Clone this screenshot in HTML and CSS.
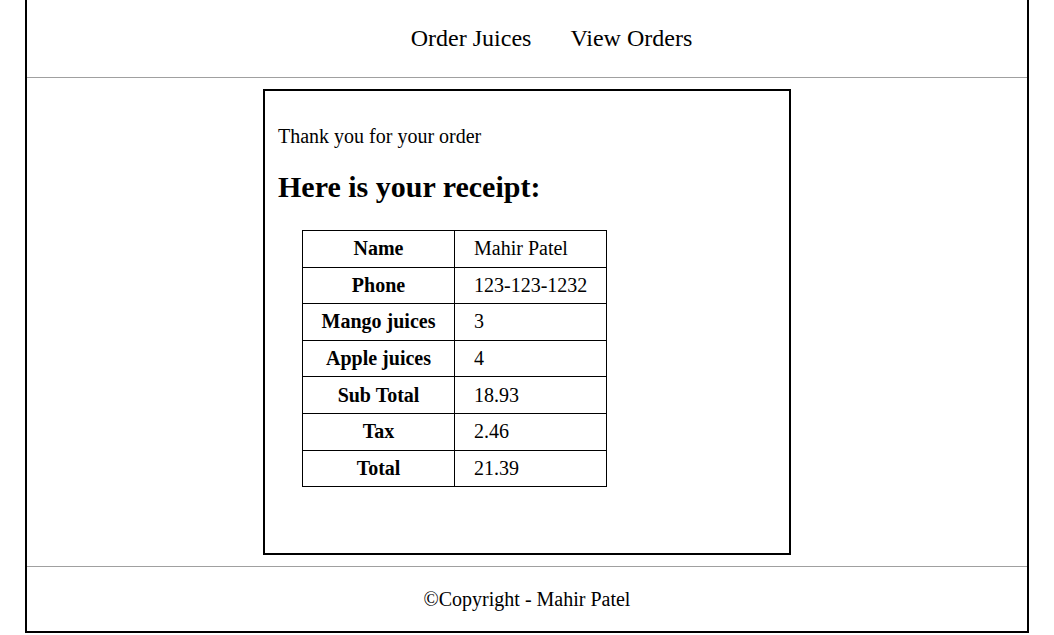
FILE: index.html
```html
<!DOCTYPE html>
<html>
<head>
<meta charset="utf-8">
<link rel="stylesheet" href="styles.css">
</head>
<body>
<div class="page">
  <header class="nav">
    <a class="nav-link">Order Juices</a>
    <a class="nav-link">View Orders</a>
  </header>
  <main class="main">
    <section class="receipt">
      <p class="thanks">Thank you for your order</p>
      <h2 class="title">Here is your receipt:</h2>
      <table class="table">
        <tr><th>Name</th><td>Mahir Patel</td></tr>
        <tr><th>Phone</th><td>123-123-1232</td></tr>
        <tr><th>Mango juices</th><td>3</td></tr>
        <tr><th>Apple juices</th><td>4</td></tr>
        <tr><th>Sub Total</th><td>18.93</td></tr>
        <tr><th>Tax</th><td>2.46</td></tr>
        <tr><th>Total</th><td>21.39</td></tr>
      </table>
    </section>
  </main>
  <footer class="footer">©Copyright - Mahir Patel</footer>
</div>
</body>
</html>
```

FILE: styles.css
```css
html, body {
  margin: 0;
  padding: 0;
  background: #fff;
}
body {
  font-family: "Liberation Serif", "Times New Roman", serif;
  font-size: 20px;
  color: #000;
}
.page {
  width: 1000px;
  margin: 0 auto;
  border: 2px solid #000;
  border-top: none;
}
.nav {
  height: 77px;
  border-bottom: 1px solid #a0a0a0;
  display: flex;
  justify-content: center;
  align-items: center;
  gap: 39px;
  padding-left: 49px;
}
.nav-link {
  font-size: 24px;
  color: #000;
}
.main {
  padding: 11px 0 11px;
}
.receipt {
  width: 524px;
  height: 462px;
  margin: 0 auto;
  border: 2px solid #000;
  padding: 0;
}
.thanks {
  margin: 34px 13px 0;
}
.title {
  font-size: 30px;
  margin: 22px 13px 26px;
}
.table {
  margin-left: 37px;
  border-collapse: collapse;
  table-layout: fixed;
  width: 305px;
}
.table th, .table td {
  box-sizing: border-box;
  border: 1px solid #000;
  width: 152px;
  line-height: 23px;
  padding: 6.3px 0;
}
.table th {
  text-align: center;
}
.table td {
  text-align: left;
  padding-left: 19px;
}
.footer {
  border-top: 1px solid #a0a0a0;
  height: 64px;
  display: flex;
  align-items: center;
  justify-content: center;
}
```
